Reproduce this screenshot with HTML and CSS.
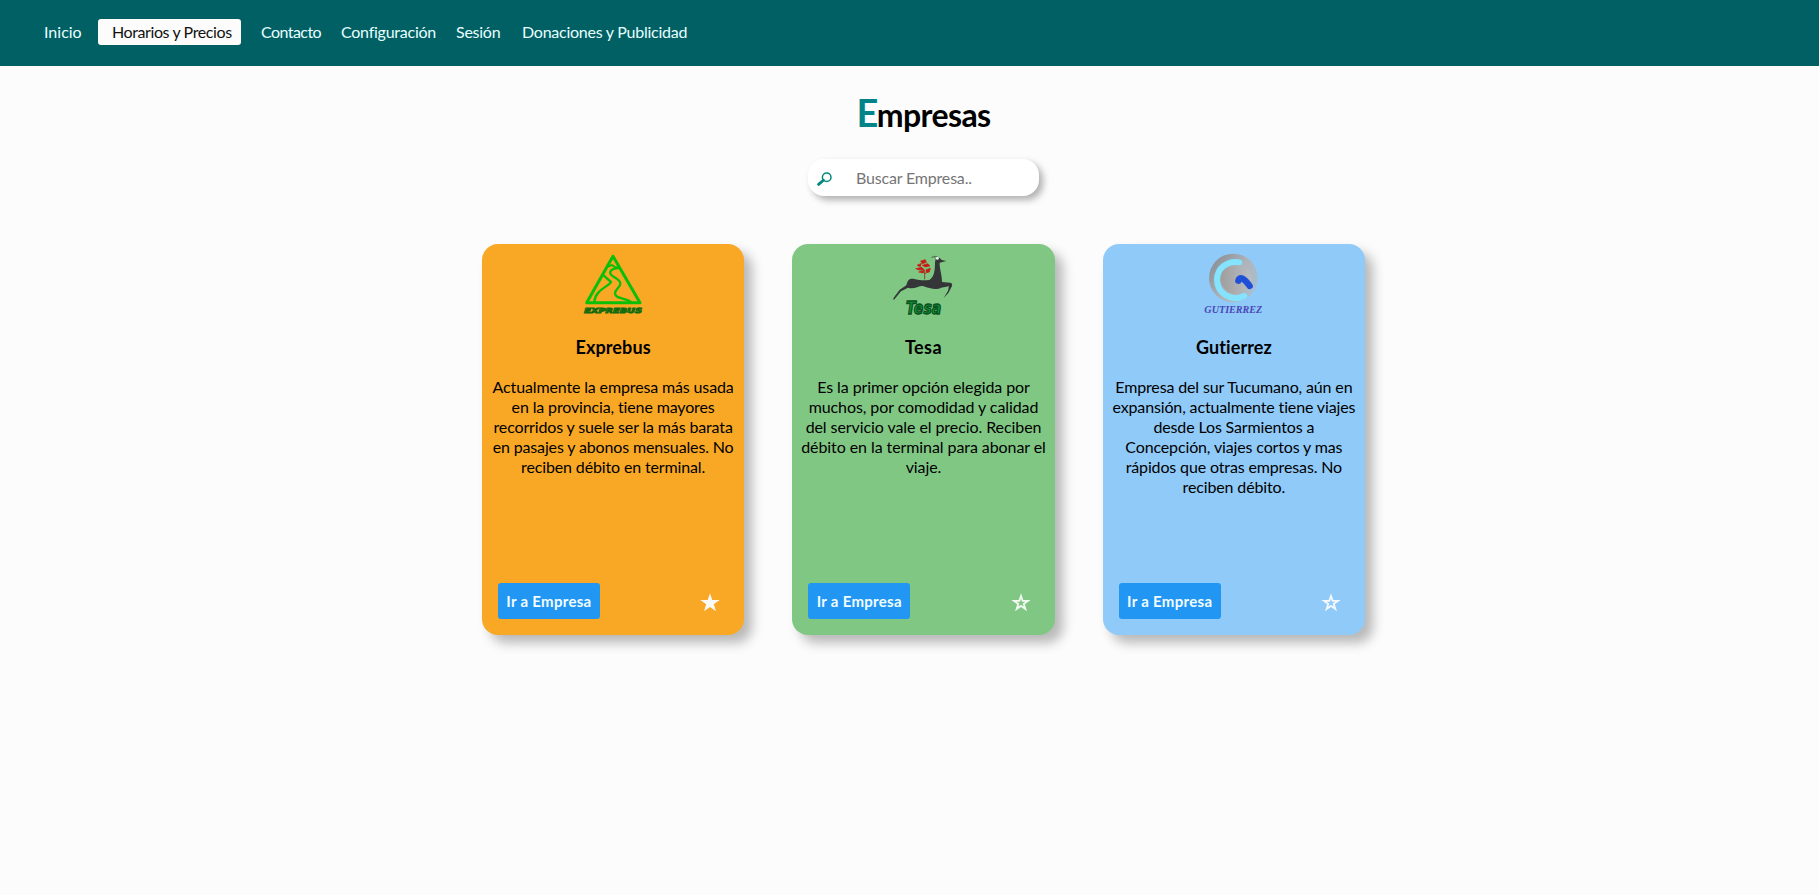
FILE: index.html
```html
<!DOCTYPE html>
<html lang="es">
<head>
<meta charset="utf-8">
<title>Empresas</title>
<link rel="stylesheet" href="styles.css">
</head>
<body>
<nav class="nav">
  <a class="link first">Inicio</a>
  <a class="link active">Horarios y Precios</a>
  <a class="link tight">Contacto</a>
  <a class="link">Configuración</a>
  <a class="link">Sesión</a>
  <a class="link">Donaciones y Publicidad</a>
</nav>
<main class="main">
  <h1 class="title"><span class="initial">E</span>mpresas</h1>
  <div class="search">
    <svg class="lens" viewBox="0 0 15 14"><circle cx="9.7" cy="5.2" r="4.3" fill="none" stroke="#00897b" stroke-width="1.5"/><path d="M6.4 8.2L1.6 12.4" stroke="#00897b" stroke-width="2.8" stroke-linecap="round"/></svg>
    <input class="field" type="text" placeholder="Buscar Empresa..">
  </div>
  <section class="cards">
    <article class="card orange">
      <svg class="logo" viewBox="39 18 180 180">
        <g fill="none" stroke="#0abf08" stroke-width="9" stroke-linejoin="round" stroke-linecap="round">
          <path d="M129 25L50 164H210Z"/>
          <path d="M114 56L126 51L137 59L147 56" stroke-width="6"/>
          <path d="M98 80L123 102C116 116 76 125 73 161" stroke-width="7"/>
          <path d="M147 60C132 60 118 66 121 77C125 88 149 91 151 106C152 119 134 123 135 137C137 153 164 149 182 161" stroke-width="7"/>
        </g>
        <text class="logo-text expre" x="43" y="196" textLength="173" lengthAdjust="spacingAndGlyphs">EXPREBUS</text>
      </svg>
      <h2 class="name">Exprebus</h2>
      <p class="text">Actualmente la empresa más usada<br>en la provincia, tiene mayores<br>recorridos y suele ser la más barata<br>en pasajes y abonos mensuales. No<br>reciben débito en terminal.</p>
      <div class="foot"><button class="go">Ir a Empresa</button>
        <svg class="star" viewBox="0 0 20 19"><path d="M10 0.3L12.3 7H19.7L13.8 11.2L16 18.3L10 14.1L4 18.3L6.2 11.2L.3 7H7.7Z" fill="#fbf9f5"/></svg></div>
    </article>
    <article class="card green">
      <svg class="logo" viewBox="40 18 180 180">
        <path d="M180 29L186 36L200 39L180 44C179 62 187 77 187 102L212 104C219 106 219 112 214 120L206 135L192 150L205 128L208 115L184 119C169 128 150 121 130 114C115 113 104 125 85 119L64 130L42 157L41 151L60 125L80 112C84 96 88 91 101 92C123 98 134 97 149 96C163 88 166 70 166 43L168 33Z" fill="#343638"/>
        <path d="M155 30C160 23 165 27 169 33M163 25C170 25 175 27 178 31" fill="none" stroke="#343638" stroke-width="2"/>
        <circle cx="173" cy="31" r="4.5" fill="#e8eee8"/>
        <path d="M135 94V66M135 78L146 69M134 75L123 67" fill="none" stroke="#8a4a2e" stroke-width="3"/>
        <path d="M123 39L137 35L140 43L128 47ZM112 52L125 46L122 56ZM128 52L144 47L151 54L137 57ZM108 62L126 58L134 65L118 66ZM117 72L133 67L130 75ZM139 65L152 61L149 72L140 74Z" fill="#c51d15" stroke="#c51d15" stroke-width="2" stroke-linejoin="round"/>
        <text class="logo-text tesa" x="79" y="197" textLength="106" lengthAdjust="spacingAndGlyphs">Tesa</text>
      </svg>
      <h2 class="name wide">Tesa</h2>
      <p class="text loose">Es la primer opción elegida por<br>muchos, por comodidad y calidad<br>del servicio vale el precio. Reciben<br>débito en la terminal para abonar el<br>viaje.</p>
      <div class="foot"><button class="go">Ir a Empresa</button>
        <svg class="star" viewBox="0 0 20 19"><path fill-rule="evenodd" d="M10 0.3L12.3 7H19.7L13.8 11.2L16 18.3L10 14.1L4 18.3L6.2 11.2L.3 7H7.7ZM10 5.6L9 8.7H5.6L8.3 10.6L7.3 13.8L10 11.8L12.7 13.8L11.7 10.6L14.4 8.7H11Z" fill="#f5faf5"/></svg></div>
    </article>
    <article class="card blue">
      <svg class="logo" viewBox="43 18 180 180">
        <defs><linearGradient id="disc" x1="0" y1="0.1" x2="1" y2="0.8"><stop offset="0" stop-color="#858b90"/><stop offset="0.55" stop-color="#aeb4ba"/><stop offset="1" stop-color="#a8c0d2"/></linearGradient>
        <linearGradient id="inner" x1="0" y1="0.5" x2="1" y2="0.5"><stop offset="0" stop-color="#a09e9e"/><stop offset="1" stop-color="#b8bec4"/></linearGradient></defs>
        <circle cx="131" cy="90" r="73" fill="url(#disc)"/>
        <circle cx="140" cy="93" r="46" fill="url(#inner)"/>
        <path d="M149 43C112 36 83 62 82 94C82 136 124 163 164 144" fill="none" stroke="#84e3ff" stroke-width="18" stroke-linecap="round"/>
        <path d="M146 98C149 85 162 88 180 114" fill="none" stroke="#1d4fd8" stroke-width="19" stroke-linecap="round" stroke-linejoin="round"/>
        <text class="logo-text guti" x="44" y="195" textLength="174" lengthAdjust="spacingAndGlyphs">GUTIERREZ</text>
      </svg>
      <h2 class="name">Gutierrez</h2>
      <p class="text">Empresa del sur Tucumano, aún en<br>expansión, actualmente tiene viajes<br>desde Los Sarmientos a<br>Concepción, viajes cortos y mas<br>rápidos que otras empresas. No<br>reciben débito.</p>
      <div class="foot"><button class="go">Ir a Empresa</button>
        <svg class="star" viewBox="0 0 20 19"><path fill-rule="evenodd" d="M10 0.3L12.3 7H19.7L13.8 11.2L16 18.3L10 14.1L4 18.3L6.2 11.2L.3 7H7.7ZM10 5.6L9 8.7H5.6L8.3 10.6L7.3 13.8L10 11.8L12.7 13.8L11.7 10.6L14.4 8.7H11Z" fill="#f5f9fd"/></svg></div>
    </article>
  </section>
</main>
</body>
</html>
```
FILE: styles.css
```css
* { box-sizing: border-box; }
body {
  margin: 0;
  min-height: 895px;
  background: #fcfcfc;
  color: #000;
  font: 16px/20px Lato, "Noto Sans", sans-serif;
  letter-spacing: -0.14px;
}
.nav {
  display: grid;
  grid-template-columns: 54px 143px 100px 115px 66px auto;
  justify-content: start;
  align-items: start;
  height: 66px;
  padding: 19px 0 0 44px;
  background: #006064;
  color: #e8ffff;
}
.link {
  height: 26px;
  line-height: 26px;
  white-space: nowrap;
  letter-spacing: -0.25px;
}
.first { letter-spacing: 0; }
.active {
  padding-left: 14px;
  border-radius: 3px;
  background: #fcfcfc;
  color: #111;
  letter-spacing: -0.4px;
}
.tight { padding-left: 20px; letter-spacing: -0.56px; }
.main {
  display: flex;
  flex-direction: column;
  align-items: center;
  padding-left: 28px;
}
.title {
  height: 48px;
  margin: 22px 0 0;
  font-size: 32px;
  font-weight: 700;
  line-height: 48px;
  letter-spacing: -0.6px;
}
.initial { color: #008489; font-size: 38px; letter-spacing: -1.5px; }
.search {
  display: flex;
  align-items: center;
  width: 231px;
  height: 37px;
  margin-top: 23px;
  padding-left: 9px;
  border-radius: 16px;
  background: #fff;
  box-shadow: 4px 4px 7px rgba(0, 0, 0, 0.3);
}
.lens { width: 15px; height: 14px; margin-top: 2px; }
.field {
  width: 180px;
  margin-left: 24px;
  padding: 0;
  border: 0;
  outline: 0;
  background: transparent;
  font: inherit;
  letter-spacing: -0.18px;
}
.field::placeholder { color: #757575; }
.cards {
  display: flex;
  gap: 48px;
  margin-top: 48px;
}
.card {
  display: flex;
  flex-direction: column;
  align-items: center;
  width: 262.4px;
  height: 391px;
  padding: 10px 0 16px;
  border-radius: 16px;
  box-shadow: 8px 8px 12px rgba(0, 0, 0, 0.27);
}
.orange { background: #f9a825; }
.green { background: #81c784; }
.blue { background: #90caf9; }
.logo { width: 60px; height: 60px; overflow: visible; }
.logo-text { font-family: "DejaVu Sans", sans-serif; font-weight: 700; letter-spacing: 0; }
.expre { font-size: 21px; font-style: italic; fill: #2ba81a; stroke: #14690e; stroke-width: 3px; }
.tesa { font-size: 53px; font-style: italic; fill: #0c9434; stroke: #0a4f20; stroke-width: 4px; }
.guti { font-family: "Liberation Serif", serif; font-size: 34px; font-style: italic; fill: #4a45b5; }
.name {
  margin: 21px 0 18px;
  font-size: 18px;
  font-weight: 700;
  line-height: 24px;
  letter-spacing: 0.1px;
}
.wide { letter-spacing: 0.4px; }
.text { margin: 0; text-align: center; white-space: nowrap; }
.loose { letter-spacing: -0.08px; }
.foot {
  display: flex;
  align-items: center;
  justify-content: space-between;
  width: 100%;
  margin-top: auto;
  padding: 0 24px 0 16px;
}
.go {
  width: 102px;
  height: 36px;
  padding: 0;
  border: 0;
  border-radius: 3px;
  background: #2196f3;
  color: #f2fdff;
  font: 700 15px/20px Lato, sans-serif;
  letter-spacing: 0.3px;
}
.star { width: 20px; height: 19px; margin-top: 2px; }
```
